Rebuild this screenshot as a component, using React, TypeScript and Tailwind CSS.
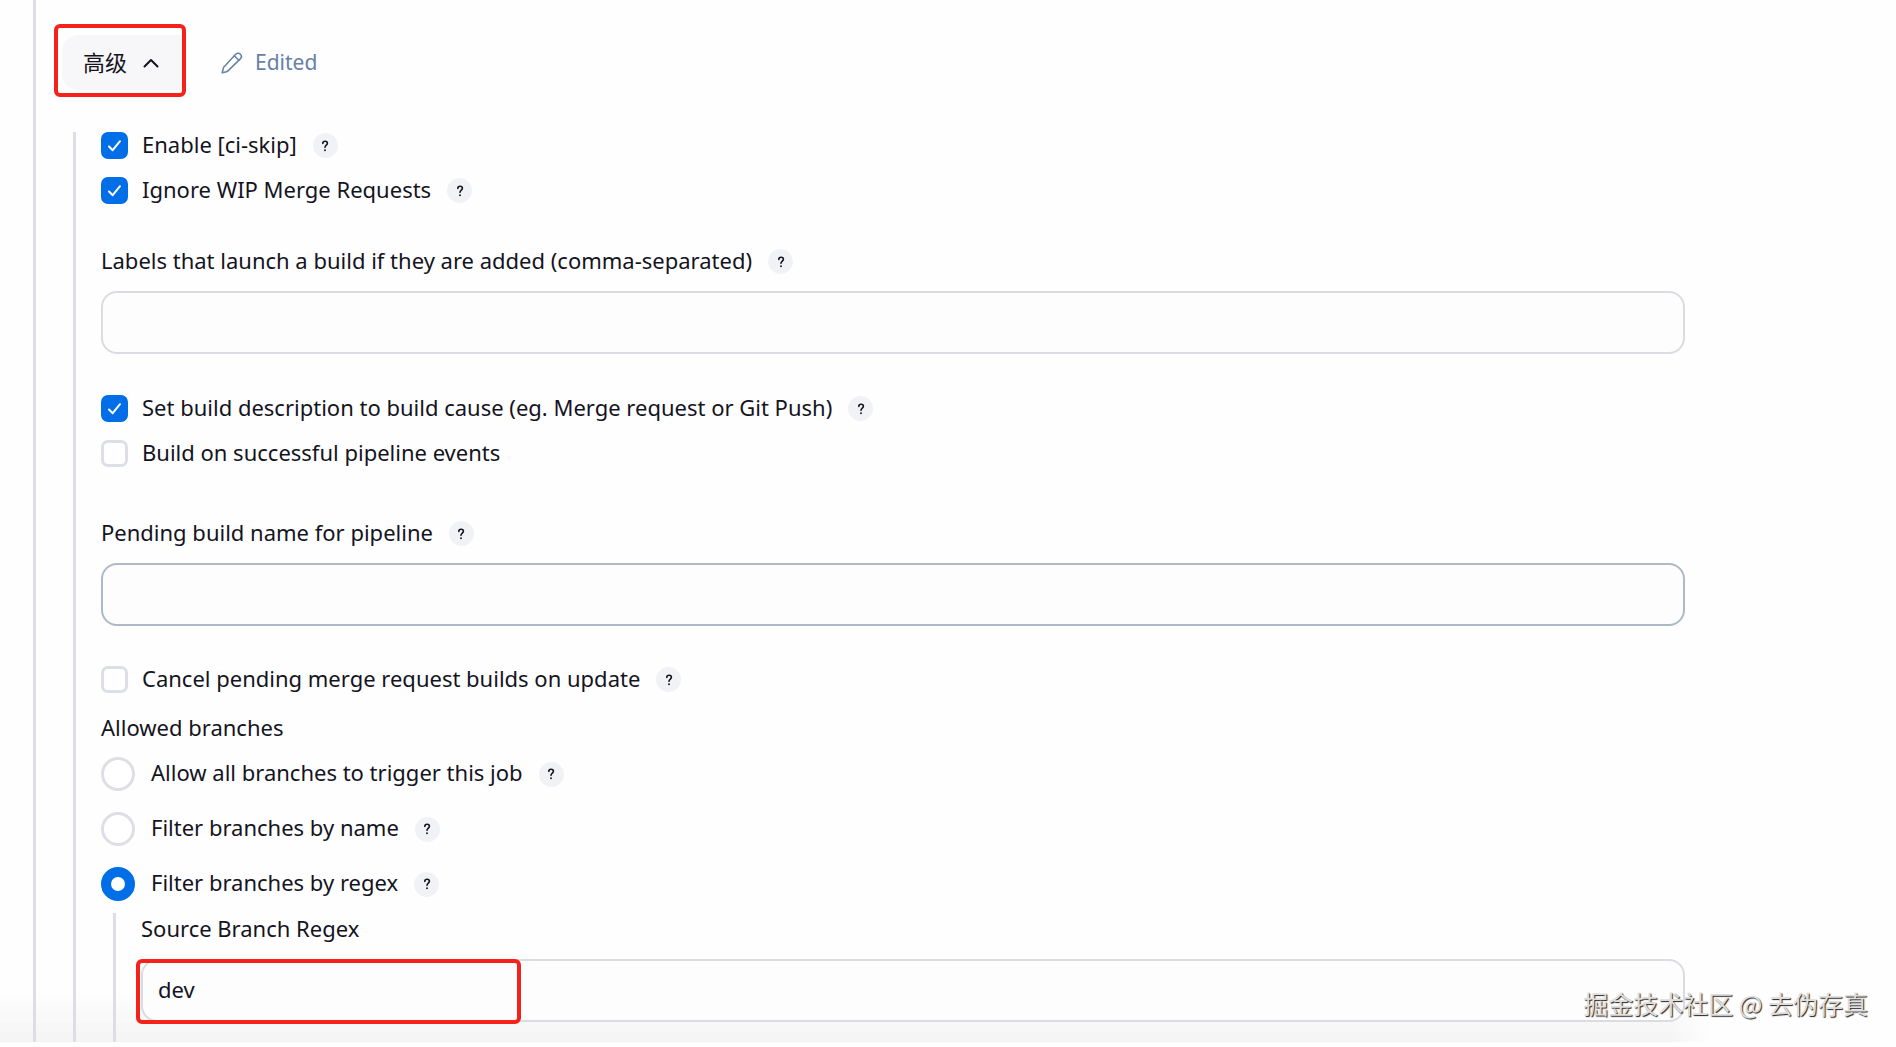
import { useState } from 'react'
import type { ReactNode } from 'react'

const inputClass =
    'block w-full h-[63px] rounded-2xl border-2 bg-[#fdfdfe] px-[15px] pb-1 text-[22px] outline-none'

function Help({ topic }: { topic: string }) {
    return (
        <button
            type="button"
            aria-label={`Help for ${topic}`}
            className="flex items-center justify-center w-[25px] h-[25px] ml-4 rounded-full bg-[#f1f2f5]"
        >
            <svg
                width="8"
                height="12"
                viewBox="0 0 9 13"
                fill="none"
                stroke="#14141f"
                strokeWidth="1.8"
                strokeLinecap="round"
                strokeLinejoin="round"
            >
                <path d="M2 3.6C2.1 2 3.1 1.2 4.6 1.2C6.1 1.2 7.2 2.1 7.2 3.5C7.2 5.4 4.5 5.6 4.5 8" />
                <path d="M4.5 11.3V11.4" strokeWidth="2.1" />
            </svg>
        </button>
    )
}

function Checkbox({
    id,
    label,
    checked = false,
    help = false,
}: {
    id: string
    label: string
    checked?: boolean
    help?: boolean
}) {
    const [on, setOn] = useState(checked)

    return (
        <div className="flex items-center h-[27px]">
            <span className="relative w-[27px] h-[27px] mr-[14px] shrink-0">
                <input
                    id={id}
                    type="checkbox"
                    checked={on}
                    onChange={(e) => setOn(e.target.checked)}
                    className="peer block appearance-none w-[27px] h-[27px] rounded-[7px] border-[3px] border-[#dddfe6] bg-white checked:border-[#006ee6] checked:bg-[#006ee6]"
                />
                <svg
                    viewBox="0 0 27 27"
                    fill="none"
                    stroke="white"
                    strokeWidth="2"
                    strokeLinecap="round"
                    strokeLinejoin="round"
                    className="hidden peer-checked:block absolute inset-0 pointer-events-none"
                >
                    <path d="M8 14.5L11.7 18.2L19 9.2" />
                </svg>
            </span>
            <label htmlFor={id} className="pb-[2px]">
                {label}
            </label>
            {help && <Help topic={label} />}
        </div>
    )
}

function Radio({
    id,
    label,
    selected,
    onSelect,
}: {
    id: string
    label: string
    selected: string
    onSelect: (id: string) => void
}) {
    return (
        <div className="flex items-center h-[34px]">
            <input
                id={id}
                type="radio"
                name="branch-filter"
                checked={selected === id}
                onChange={() => onSelect(id)}
                className="appearance-none w-[34px] h-[34px] mr-4 shrink-0 rounded-full border-[3px] border-[#dddfe4] bg-white checked:border-[10px] checked:border-[#006ee6]"
            />
            <label htmlFor={id} className="pb-[3px]">
                {label}
            </label>
            <Help topic={label} />
        </div>
    )
}

function FieldLabel({
    id,
    children,
    help = false,
}: {
    id: string
    children: string
    help?: boolean
}) {
    return (
        <div className="flex items-center h-[27px] mb-4">
            <label htmlFor={id} className="pb-[2px]">
                {children}
            </label>
            {help && <Help topic={children} />}
        </div>
    )
}

function Highlight({ children }: { children: ReactNode }) {
    return (
        <div className="rounded-md border-4 border-[#f5221b] pl-1 pt-[7px] pb-[3px]">
            {children}
        </div>
    )
}

export default function App() {
    const [filter, setFilter] = useState('filter-regex')

    return (
        <main className="relative min-h-screen overflow-hidden bg-[#fefefe] pb-[5px] font-['Noto_Sans','Noto_Sans_CJK_SC',sans-serif] text-[22px] leading-[27px] text-[#14141f]">
            {/* Fade at the bottom edge */}
            <div className="absolute left-0 right-[186px] bottom-[5px] h-[50px] bg-gradient-to-b from-transparent to-[#f4f4f5] [mask-image:linear-gradient(to_left,transparent,black_40px)]" />

            <section className="relative ml-[33px] border-l-[3px] border-[#dcdde6] pt-6 pl-[18px]">
                {/* Header */}
                <div className="flex items-center">
                    <Highlight>
                        <button
                            type="button"
                            aria-expanded="true"
                            className="flex items-center h-[55px] pl-[21px] pr-[23px] rounded-l-2xl bg-[#f7f7fa]"
                        >
                            <span>高级</span>
                            <svg
                                width="16"
                                height="10"
                                viewBox="0 0 16 10"
                                fill="none"
                                stroke="currentColor"
                                strokeWidth="2"
                                strokeLinecap="round"
                                strokeLinejoin="round"
                                className="ml-4"
                            >
                                <path d="M1.5 8.5L8 2L14.5 8.5" />
                            </svg>
                        </button>
                    </Highlight>
                    <div className="flex items-center ml-[35px] pt-1 text-[21px] text-[#6680a6]">
                        <svg
                            width="22"
                            height="22"
                            viewBox="0 0 22 22"
                            fill="none"
                            stroke="currentColor"
                            strokeWidth="1.5"
                            strokeLinecap="round"
                            strokeLinejoin="round"
                        >
                            <path d="M14.7 2.3C15.9 1.1 17.9 0.7 19.4 2.2C20.9 3.7 20.5 5.7 19.3 6.9L7.2 18.6C6.7 19.1 6.1 19.4 5.4 19.7L1.2 20.8L2.3 16.4C2.5 15.6 2.8 15 3.4 14.4Z" />
                            <path d="M13.3 3.7L17.9 8.3" />
                        </svg>
                        <span className="ml-3">Edited</span>
                    </div>
                </div>

                {/* Advanced options */}
                <div className="mt-[35px] ml-[19px] mr-[211px] border-l-[3px] border-[#dcdde6] pl-[25px]">
                    <div className="flex flex-col gap-[18px]">
                        <Checkbox id="ci-skip" label="Enable [ci-skip]" checked help />
                        <Checkbox id="ignore-wip" label="Ignore WIP Merge Requests" checked help />
                    </div>

                    <div className="mt-11">
                        <FieldLabel id="labels" help>
                            Labels that launch a build if they are added (comma-separated)
                        </FieldLabel>
                        <input id="labels" type="text" className={`${inputClass} border-[#dadce2]`} />
                    </div>

                    <div className="flex flex-col gap-[18px] mt-[41px]">
                        <Checkbox
                            id="description"
                            label="Set build description to build cause (eg. Merge request or Git Push)"
                            checked
                            help
                        />
                        <Checkbox id="pipeline-events" label="Build on successful pipeline events" />
                    </div>

                    <div className="mt-[53px]">
                        <FieldLabel id="pending-name" help>
                            Pending build name for pipeline
                        </FieldLabel>
                        <input
                            id="pending-name"
                            type="text"
                            className={`${inputClass} border-[#adb8c9]`}
                        />
                    </div>

                    <div className="mt-10">
                        <Checkbox
                            id="cancel-pending"
                            label="Cancel pending merge request builds on update"
                            help
                        />
                    </div>

                    {/* Branch filter */}
                    <fieldset className="mt-[21px]">
                        <legend className="mb-4">Allowed branches</legend>
                        <div className="flex flex-col gap-[21px]">
                            <Radio
                                id="allow-all"
                                label="Allow all branches to trigger this job"
                                selected={filter}
                                onSelect={setFilter}
                            />
                            <Radio
                                id="filter-name"
                                label="Filter branches by name"
                                selected={filter}
                                onSelect={setFilter}
                            />
                            <Radio
                                id="filter-regex"
                                label="Filter branches by regex"
                                selected={filter}
                                onSelect={setFilter}
                            />
                        </div>
                    </fieldset>

                    <div className="mt-3 ml-3 border-l-[3px] border-[#dcdde6] pt-[3px] pb-5 pl-[25px]">
                        <FieldLabel id="source-regex">Source Branch Regex</FieldLabel>
                        <div className="relative">
                            <input
                                id="source-regex"
                                type="text"
                                defaultValue="dev"
                                className={`${inputClass} border-[#dadce2]`}
                            />
                            <div className="absolute -left-[5px] top-0 w-[385px] h-[65px] rounded-md border-4 border-[#f5221b] pointer-events-none" />
                        </div>
                    </div>
                </div>
            </section>

            {/* Watermark */}
            <p className="absolute right-7 bottom-[30px] font-['Noto_Sans_CJK_SC',sans-serif] text-[25px] text-[#dedede] [text-shadow:1px_1px_1px_#222]">
                掘金技术社区 @ 去伪存真
            </p>
        </main>
    )
}
